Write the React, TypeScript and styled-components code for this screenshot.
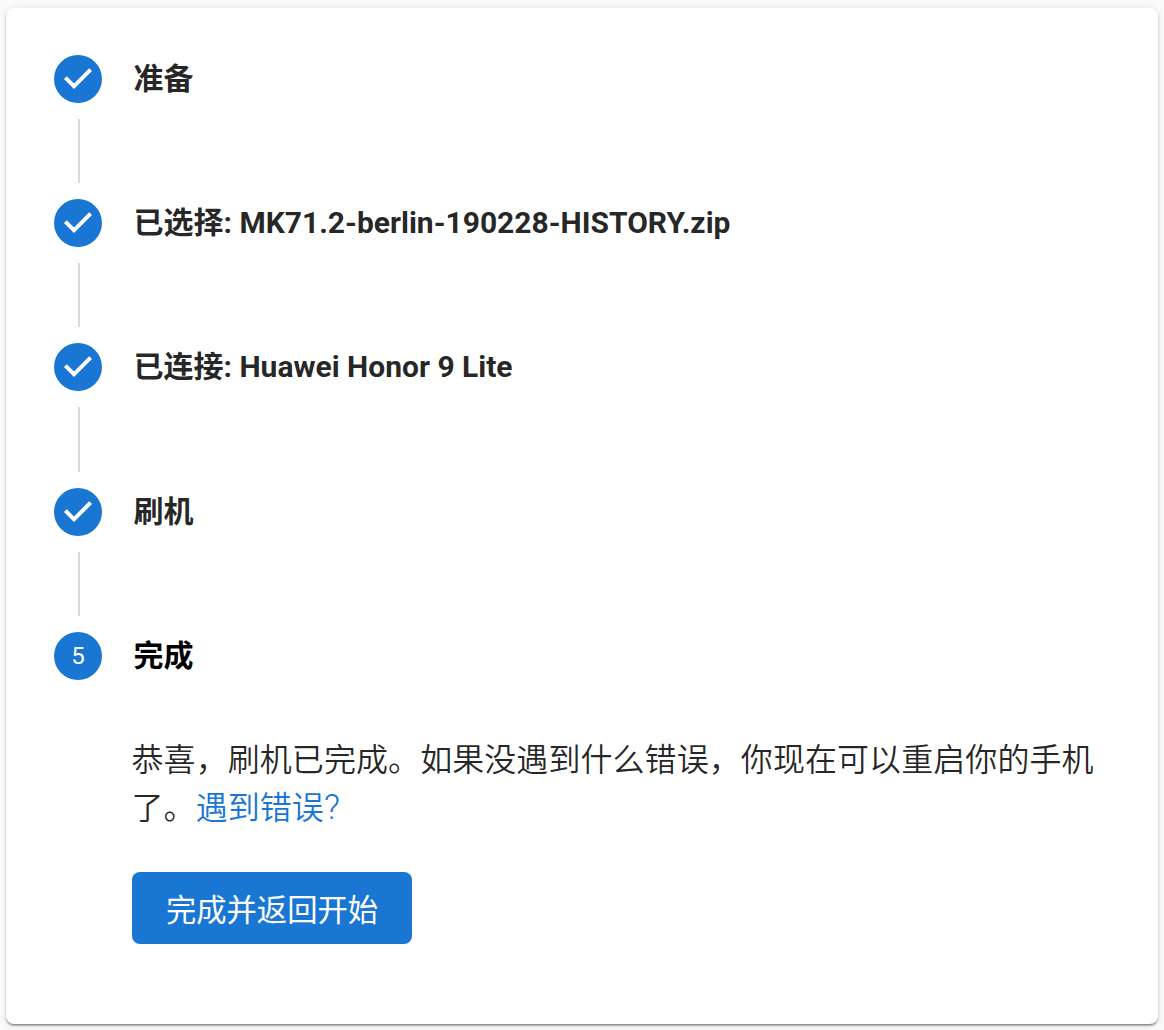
import styled, { createGlobalStyle } from "styled-components";

const GlobalStyle = createGlobalStyle`
    html, body {
        margin: 0;
        padding: 0;
        background: #fafafa;
        font-family: Roboto, "Noto Sans CJK SC", sans-serif;
    }
`;

const labels = [
    "准备",
    "已选择: MK71.2-berlin-190228-HISTORY.zip",
    "已连接: Huawei Honor 9 Lite",
    "刷机",
];

function CheckIcon() {
    return (
        <StepSvg viewBox="0 0 24 24">
            <path d="M12 0a12 12 0 1 0 0 24 12 12 0 0 0 0-24zm-2 17l-5-5 1.4-1.4 3.6 3.6 7.6-7.6L19 8l-9 9z" />
        </StepSvg>
    );
}

function App() {
    return (
        <Page>
            <GlobalStyle />
            <Card>
                {labels.map((label) => (
                    <div key={label}>
                        <StepRow>
                            <CheckIcon />
                            <StepLabel>{label}</StepLabel>
                        </StepRow>
                        <Connector />
                    </div>
                ))}

                <StepRow>
                    <StepNumber>5</StepNumber>
                    <StepLabel $active>完成</StepLabel>
                </StepRow>

                <StepContent>
                    <Message>
                        恭喜，刷机已完成。如果没遇到什么错误，你现在可以重启你的手机了。
                        <HelpLink href="#">
                            遇到错误<QuestionMark>?</QuestionMark>
                        </HelpLink>
                    </Message>
                    <FinishButton type="button">完成并返回开始</FinishButton>
                </StepContent>
            </Card>
        </Page>
    );
}

export default App;

// --- Styled Components ---

const Page = styled.div`
    width: 1164px;
    height: 1030px;
    box-sizing: border-box;
    padding: 8px 6px 6px;
    overflow: hidden;
`;

const Card = styled.div`
    box-sizing: border-box;
    height: 1016px;
    padding: 46.9px 48px 0;
    background: #ffffff;
    border-radius: 8px;
    box-shadow:
        0 2px 2px -1px rgba(0, 0, 0, 0.3),
        0 2px 2px 0 rgba(0, 0, 0, 0.2),
        0 1px 6px 0 rgba(0, 0, 0, 0.12);
`;

const StepRow = styled.div`
    display: flex;
    align-items: center;
    height: 48px;
`;

const StepSvg = styled.svg`
    flex: none;
    width: 48px;
    height: 48px;
    fill: #1976d2;
`;

const StepNumber = styled.div`
    flex: none;
    display: flex;
    align-items: center;
    justify-content: center;
    width: 48px;
    height: 48px;
    border-radius: 50%;
    background: #1976d2;
    color: #ffffff;
    font-size: 24px;
`;

const StepLabel = styled.div<{ $active?: boolean }>`
    margin-left: 31.5px;
    font-size: 30px;
    font-weight: 700;
    line-height: 48px;
    color: ${({ $active }) => ($active ? "#000000" : "rgba(0, 0, 0, 0.87)")};
`;

const Connector = styled.div`
    box-sizing: border-box;
    width: 2px;
    height: 64.25px;
    margin: 16px 0 16px 24px;
    background: #d9d9d9;
`;

const StepContent = styled.div`
    margin: 0 16px 0 77.5px;
    padding-top: 56px;
`;

const Message = styled.p`
    margin: 0 0 40px;
    font-size: 32px;
    font-weight: 350;
    letter-spacing: 0.07px;
    line-height: 48px;
    color: rgba(0, 0, 0, 0.87);
`;

const HelpLink = styled.a`
    color: #1976d2;
    text-decoration: none;
`;

const QuestionMark = styled.span`
    font-size: 35px;
    font-weight: 300;
    line-height: 1;
`;

const FinishButton = styled.button`
    display: block;
    width: 280px;
    height: 72px;
    margin-left: 0.5px;
    padding: 0;
    border: none;
    border-radius: 8px;
    background: #1976d2;
    color: #ffffff;
    font-family: inherit;
    font-size: 30.3px;
    font-weight: 400;
`;
